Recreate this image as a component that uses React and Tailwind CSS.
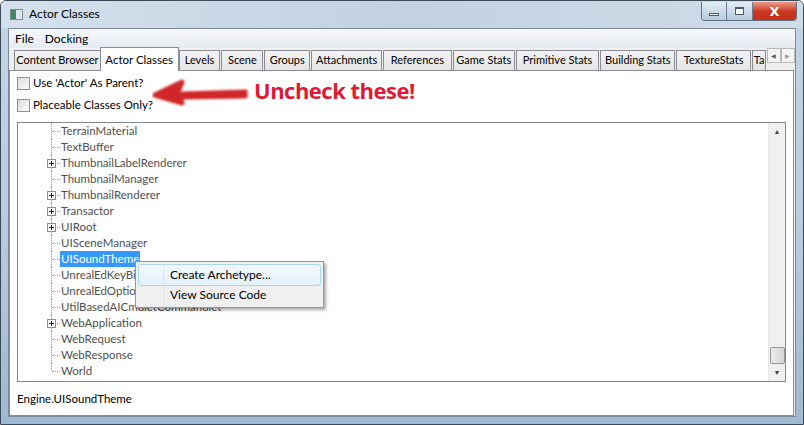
const tabs = [
  { label: "Content Browser", w: "w-[87px]" },
  { label: "Actor Classes", w: "w-[79px]", active: true },
  { label: "Levels", w: "w-[42px]" },
  { label: "Scene", w: "w-[42px]" },
  { label: "Groups", w: "w-[46px]" },
  { label: "Attachments", w: "w-[71px]" },
  { label: "References", w: "w-[69px]" },
  { label: "Game Stats", w: "w-[62px]" },
  { label: "Primitive Stats", w: "w-[84px]" },
  { label: "Building Stats", w: "w-[75px]" },
  { label: "TextureStats", w: "w-[75px]" },
  { label: "Ta", w: "w-[14px]" },
];

const rows = [
  { name: "TerrainMaterial" },
  { name: "TextBuffer" },
  { name: "ThumbnailLabelRenderer", plus: true },
  { name: "ThumbnailManager" },
  { name: "ThumbnailRenderer", plus: true },
  { name: "Transactor", plus: true },
  { name: "UIRoot", plus: true },
  { name: "UISceneManager" },
  { name: "UISoundTheme", selected: true },
  { name: "UnrealEdKeyBindings" },
  { name: "UnrealEdOptions" },
  { name: "UtilBasedAICmdletCommandlet" },
  { name: "WebApplication", plus: true },
  { name: "WebRequest" },
  { name: "WebResponse" },
  { name: "World", last: true },
];

const Checkbox = ({ label }) => (
  <div className="flex items-center gap-[3px] h-[22px] whitespace-nowrap">
    <div className="w-[13px] h-[13px] border border-[#8e8f8f] bg-gradient-to-br from-[#dcdcdc] to-[#fbfbfb]" />
    <span>{label}</span>
  </div>
);

const TreeRow = ({ row }) => (
  <div className="relative h-[16px] flex items-center">
    {/* dotted guides */}
    <div
      className={`absolute left-[33px] top-0 border-l border-dotted border-[#a0a0a0] ${
        row.last ? "h-[8px]" : "h-[16px]"
      }`}
    />
    <div className="absolute left-[34px] top-[8px] w-[8px] border-t border-dotted border-[#a0a0a0]" />
    {row.plus && (
      <div className="absolute left-[29px] top-[4px] w-[9px] h-[9px] border border-[#919191] bg-white flex items-center justify-center">
        <svg width="7" height="7" viewBox="0 0 7 7">
          <path d="M1 3.5h5M3.5 1v5" stroke="#222" strokeWidth="1" />
        </svg>
      </div>
    )}
    <span
      className={`ml-[42px] px-[1px] leading-[16px] whitespace-nowrap ${
        row.selected ? "bg-[#3399ff] text-white" : "text-[#505050]"
      }`}
    >
      {row.name}
    </span>
  </div>
);

export default function App() {
  return (
    <div
      className="w-[804px] h-[425px] overflow-hidden flex flex-col bg-gradient-to-b from-[#c3d5e6] via-[#b9cde0] to-[#9fb9d2] border border-[#3c4a58] rounded-t-[6px] text-[11.5px] text-black"
      style={{ fontFamily: 'Lato, "Noto Sans", sans-serif' }}
    >
      {/* title bar */}
      <div className="h-[27px] flex items-start shrink-0 bg-gradient-to-r from-[#d4e1ed] via-[#c2d2e2] to-[#d0dde9]">
        <div className="flex items-center h-[26px] pl-[9px] gap-[6px] flex-1">
          <div className="w-[13px] h-[11px] border border-[#7f8b98] bg-[#dfe5ea] flex">
            <div className="w-[5px] bg-[#3e8a66]" />
          </div>
          <span className="text-[12px] text-black">Actor Classes</span>
        </div>
        <div className="flex mr-[6px] mt-[1px] rounded-b-[4px] border border-t-0 border-[#5d6f82] overflow-hidden">
          <div className="w-[25px] h-[18px] bg-gradient-to-b from-[#e3ecf4] to-[#b9cade] border-r border-[#6b7c8e] flex items-center justify-center">
            <div className="w-[10px] h-[3px] mt-[6px] border border-[#4b5a6b] bg-white" />
          </div>
          <div className="w-[26px] h-[18px] bg-gradient-to-b from-[#e3ecf4] to-[#b9cade] border-r border-[#6b7c8e] flex items-center justify-center">
            <div className="w-[9px] h-[8px] border border-[#4b5a6b] border-t-2 bg-white" />
          </div>
          <div className="w-[43px] h-[18px] bg-gradient-to-b from-[#e99a88] via-[#cf3a22] to-[#c42d16] flex items-center justify-center">
            <span className="text-white font-bold text-[13px] leading-none" style={{ fontFamily: '"DejaVu Sans", sans-serif' }}>
              X
            </span>
          </div>
        </div>
      </div>

      {/* client */}
      <div className="flex-1 mx-[7px] bg-[#f0f0f0] border border-[#7c8a98] flex flex-col min-h-0">
        {/* menu bar */}
        <div className="h-[19px] flex items-center gap-[11px] pl-[6px] bg-gradient-to-b from-[#f6f8fb] to-[#e6ebf1] shrink-0 text-[12px]">
          <span>File</span>
          <span>Docking</span>
        </div>

        {/* tab strip */}
        <div className="h-[22px] flex items-end pl-[4px] shrink-0 text-[11px]">
          {tabs.map((t) =>
            t.active ? (
              <div
                key={t.label}
                className={`${t.w} h-[24px] -mb-[1px] -mx-[1px] relative z-10 bg-white border border-b-0 border-[#898c95] flex items-center justify-center whitespace-nowrap text-[11.5px]`}
              >
                {t.label}
              </div>
            ) : (
              <div
                key={t.label}
                className={`${t.w} h-[20px] ml-[1px] bg-gradient-to-b from-[#f3f3f3] to-[#e5e5e5] border border-b-0 border-[#898c95] flex items-center justify-center overflow-hidden whitespace-nowrap`}
              >
                {t.label}
              </div>
            )
          )}
          <div className="h-[20px] ml-[1px] mb-[2px] flex">
            <div className="w-[14px] h-[15px] border border-[#b9b9b9] bg-[#f4f4f4] flex items-center justify-center text-[6px] text-[#555]">◀</div>
            <div className="w-[14px] h-[15px] border border-[#b9b9b9] bg-[#f4f4f4] flex items-center justify-center text-[6px] text-[#999]">▶</div>
          </div>
        </div>

        {/* tab panel */}
        <div className="flex-1 bg-white border border-[#898c95] mr-[1px] flex flex-col pl-[7px] pr-[7px] pt-[1px] min-h-0">
          <div className="flex items-start h-[50px] shrink-0">
            <div className="flex flex-col w-[137px]">
              <Checkbox label="Use 'Actor' As Parent?" />
              <Checkbox label="Placeable Classes Only?" />
            </div>
            <svg width="100" height="40" viewBox="0 0 100 40" className="mt-[4px] -ml-[2px]">
              <defs>
                <filter id="soft" x="-10%" y="-30%" width="120%" height="160%">
                  <feGaussianBlur stdDeviation="1.1" />
                </filter>
              </defs>
              <g filter="url(#soft)" fill="#d0262b" stroke="#d0262b" strokeLinecap="round" strokeLinejoin="round">
                <path d="M30 17 L94 15 L94 21 L30 22 Z" strokeWidth="3" />
                <path d="M3 19 L30 6 L26 16 L30 27 Z" strokeWidth="5" />
              </g>
            </svg>
            <span
              className="ml-[2px] mt-[2px] text-[22px] font-bold text-[#df1a35] tracking-[-0.5px] whitespace-nowrap"
              style={{ fontFamily: '"Open Sans", "Liberation Sans", sans-serif' }}
            >
              Uncheck these!
            </span>
          </div>

          {/* tree box */}
          <div className="h-[262px] border border-[#828790] flex relative">
            <div className="flex-1 flex flex-col">
              {rows.map((r) => (
                <TreeRow key={r.name} row={r} />
              ))}
            </div>
            <div className="w-[17px] bg-[#f0f0f0] border-l border-[#e6e6e6] flex flex-col items-center">
              <div className="h-[17px] flex items-center justify-center text-[7px] text-[#444]">▲</div>
              <div className="flex-1" />
              <div className="w-[15px] h-[17px] border border-[#979797] rounded-[2px] bg-gradient-to-r from-[#eaeaea] to-[#d8d8d8]" />
              <div className="h-[17px] flex items-center justify-center text-[7px] text-[#444]">▼</div>
            </div>

            {/* context menu */}
            <div className="absolute left-[117px] top-[138px] w-[189px] h-[47px] bg-[#f0f0f0] border border-[#979797] shadow-[2px_2px_3px_rgba(0,0,0,0.35)] p-[2px] flex flex-col whitespace-nowrap text-[12px]">
              <div className="absolute left-[27px] top-[2px] bottom-[2px] border-l border-[#e2e3e3]" />
              <div className="h-[22px] flex items-center pl-[31px] border border-[#a8d8eb] rounded-[3px] bg-gradient-to-b from-[#f2f8fc] to-[#e3f1fa]">
                Create Archetype...
              </div>
              <div className="h-[20px] flex items-center pl-[32px]">View Source Code</div>
            </div>
          </div>

          <div className="h-[33px] flex items-center shrink-0">Engine.UISoundTheme</div>
        </div>
      </div>
      <div className="h-[7px] shrink-0" />
    </div>
  );
}
